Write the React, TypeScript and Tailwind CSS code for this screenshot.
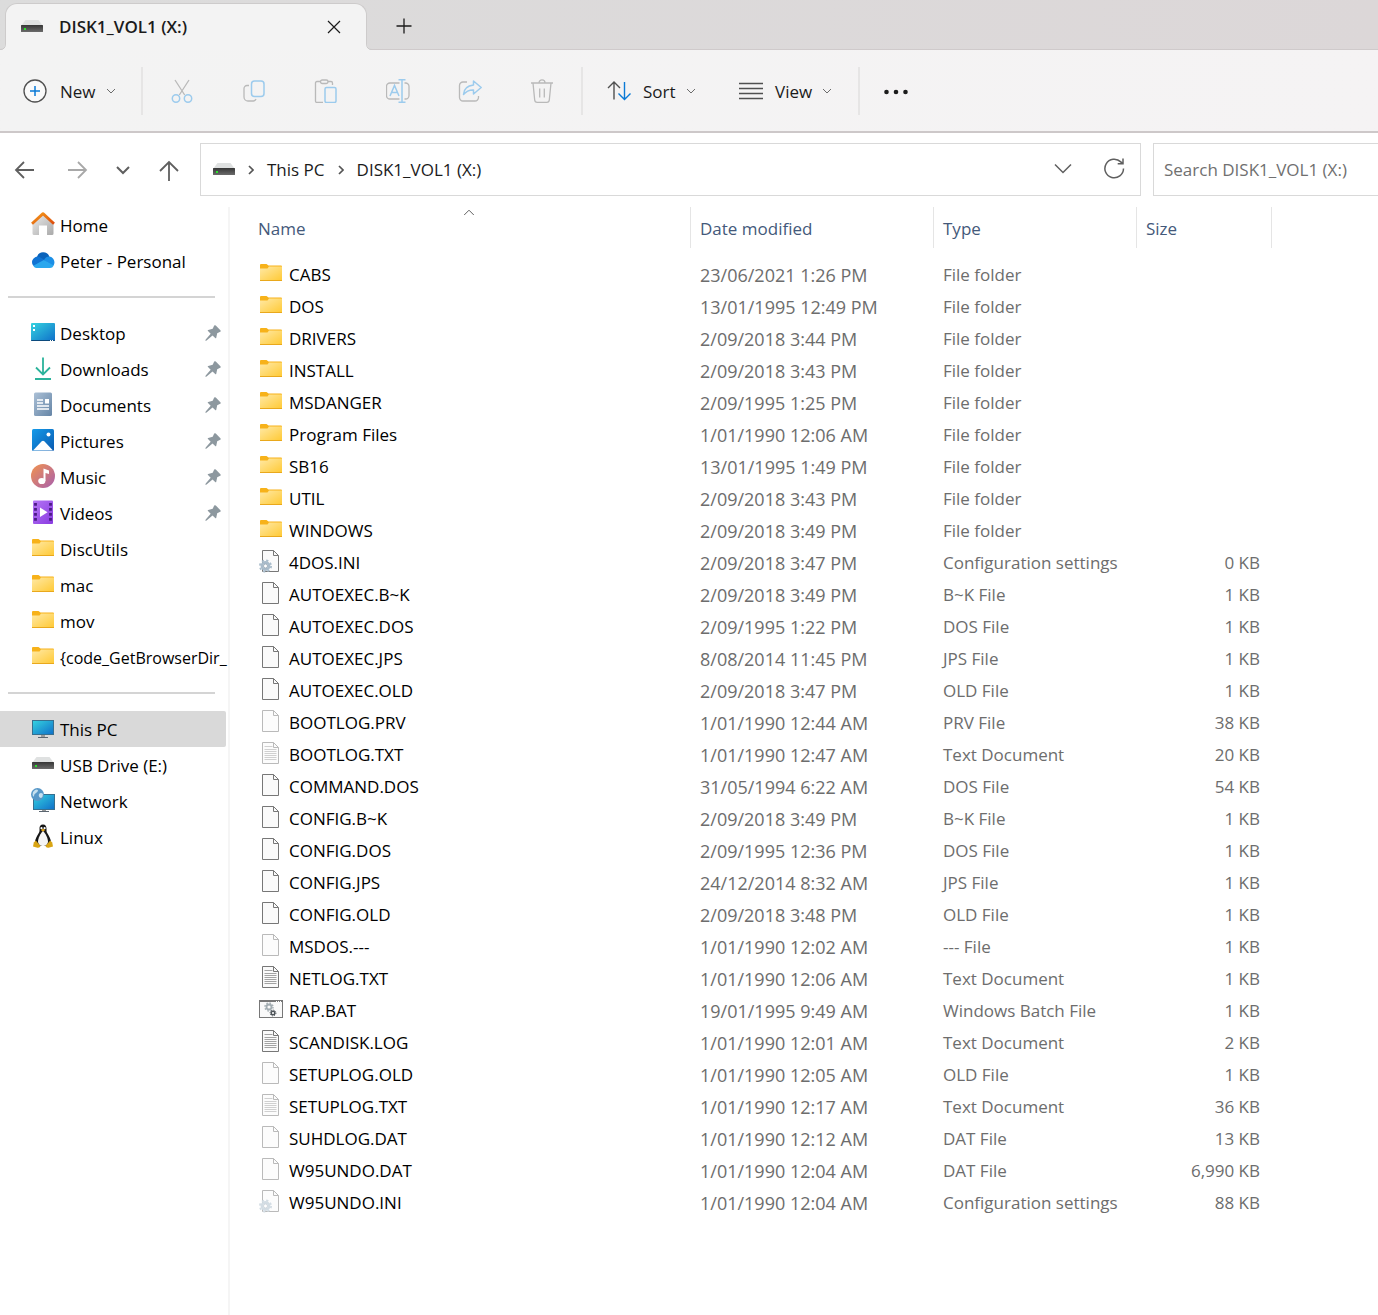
import { useState } from "react"
import type { ReactNode } from "react"

type FileKind = "folder" | "ini" | "file" | "text" | "batch"

type Entry = {
  name: string
  modified: string
  type: string
  size?: string
  kind: FileKind
  hidden?: boolean
}

const entries: Entry[] = [
  { name: "CABS", modified: "23/06/2021 1:26 PM", type: "File folder", kind: "folder" },
  { name: "DOS", modified: "13/01/1995 12:49 PM", type: "File folder", kind: "folder" },
  { name: "DRIVERS", modified: "2/09/2018 3:44 PM", type: "File folder", kind: "folder" },
  { name: "INSTALL", modified: "2/09/2018 3:43 PM", type: "File folder", kind: "folder" },
  { name: "MSDANGER", modified: "2/09/1995 1:25 PM", type: "File folder", kind: "folder" },
  { name: "Program Files", modified: "1/01/1990 12:06 AM", type: "File folder", kind: "folder" },
  { name: "SB16", modified: "13/01/1995 1:49 PM", type: "File folder", kind: "folder" },
  { name: "UTIL", modified: "2/09/2018 3:43 PM", type: "File folder", kind: "folder" },
  { name: "WINDOWS", modified: "2/09/2018 3:49 PM", type: "File folder", kind: "folder" },
  { name: "4DOS.INI", modified: "2/09/2018 3:47 PM", type: "Configuration settings", size: "0 KB", kind: "ini" },
  { name: "AUTOEXEC.B~K", modified: "2/09/2018 3:49 PM", type: "B~K File", size: "1 KB", kind: "file" },
  { name: "AUTOEXEC.DOS", modified: "2/09/1995 1:22 PM", type: "DOS File", size: "1 KB", kind: "file" },
  { name: "AUTOEXEC.JPS", modified: "8/08/2014 11:45 PM", type: "JPS File", size: "1 KB", kind: "file" },
  { name: "AUTOEXEC.OLD", modified: "2/09/2018 3:47 PM", type: "OLD File", size: "1 KB", kind: "file" },
  { name: "BOOTLOG.PRV", modified: "1/01/1990 12:44 AM", type: "PRV File", size: "38 KB", kind: "file", hidden: true },
  { name: "BOOTLOG.TXT", modified: "1/01/1990 12:47 AM", type: "Text Document", size: "20 KB", kind: "text", hidden: true },
  { name: "COMMAND.DOS", modified: "31/05/1994 6:22 AM", type: "DOS File", size: "54 KB", kind: "file" },
  { name: "CONFIG.B~K", modified: "2/09/2018 3:49 PM", type: "B~K File", size: "1 KB", kind: "file" },
  { name: "CONFIG.DOS", modified: "2/09/1995 12:36 PM", type: "DOS File", size: "1 KB", kind: "file" },
  { name: "CONFIG.JPS", modified: "24/12/2014 8:32 AM", type: "JPS File", size: "1 KB", kind: "file" },
  { name: "CONFIG.OLD", modified: "2/09/2018 3:48 PM", type: "OLD File", size: "1 KB", kind: "file" },
  { name: "MSDOS.---", modified: "1/01/1990 12:02 AM", type: "--- File", size: "1 KB", kind: "file", hidden: true },
  { name: "NETLOG.TXT", modified: "1/01/1990 12:06 AM", type: "Text Document", size: "1 KB", kind: "text" },
  { name: "RAP.BAT", modified: "19/01/1995 9:49 AM", type: "Windows Batch File", size: "1 KB", kind: "batch" },
  { name: "SCANDISK.LOG", modified: "1/01/1990 12:01 AM", type: "Text Document", size: "2 KB", kind: "text" },
  { name: "SETUPLOG.OLD", modified: "1/01/1990 12:05 AM", type: "OLD File", size: "1 KB", kind: "file", hidden: true },
  { name: "SETUPLOG.TXT", modified: "1/01/1990 12:17 AM", type: "Text Document", size: "36 KB", kind: "text", hidden: true },
  { name: "SUHDLOG.DAT", modified: "1/01/1990 12:12 AM", type: "DAT File", size: "13 KB", kind: "file", hidden: true },
  { name: "W95UNDO.DAT", modified: "1/01/1990 12:04 AM", type: "DAT File", size: "6,990 KB", kind: "file", hidden: true },
  { name: "W95UNDO.INI", modified: "1/01/1990 12:04 AM", type: "Configuration settings", size: "88 KB", kind: "ini", hidden: true },
]

// Gradients shared by every icon, defined once at the top of the page
function Gradients() {
  return (
    <svg className="absolute h-0 w-0" aria-hidden="true">
      <defs>
        <linearGradient id="g-folder" x1="0" y1="0" x2="1" y2="1">
          <stop offset="0" stopColor="#ffe9a6" />
          <stop offset="1" stopColor="#ffca37" />
        </linearGradient>
        <linearGradient id="g-screen" x1="0" y1="0" x2="1" y2="1">
          <stop offset="0" stopColor="#35d3e0" />
          <stop offset="1" stopColor="#0f6fc9" />
        </linearGradient>
        <linearGradient id="g-roof" x1="0" y1="0" x2="1" y2="1">
          <stop offset="0" stopColor="#f59b1b" />
          <stop offset="1" stopColor="#dc4b0c" />
        </linearGradient>
        <linearGradient id="g-wall" x1="0" y1="0" x2="1" y2="1">
          <stop offset="0" stopColor="#ececec" />
          <stop offset="1" stopColor="#a9a9a9" />
        </linearGradient>
        <linearGradient id="g-doc" x1="0" y1="0" x2="1" y2="1">
          <stop offset="0" stopColor="#abc0d6" />
          <stop offset="1" stopColor="#6585a6" />
        </linearGradient>
        <linearGradient id="g-picture" x1="0" y1="0" x2="1" y2="1">
          <stop offset="0" stopColor="#159bea" />
          <stop offset="1" stopColor="#0a5ab0" />
        </linearGradient>
        <linearGradient id="g-music" x1="0" y1="0" x2="1" y2="1">
          <stop offset="0" stopColor="#f2934e" />
          <stop offset="1" stopColor="#a85fae" />
        </linearGradient>
        <linearGradient id="g-video" x1="0" y1="0" x2="1" y2="1">
          <stop offset="0" stopColor="#b475f5" />
          <stop offset="1" stopColor="#8a3be0" />
        </linearGradient>
        <linearGradient id="g-drive" x1="0" y1="0" x2="0" y2="1">
          <stop offset="0" stopColor="#363636" />
          <stop offset="1" stopColor="#6b6b6b" />
        </linearGradient>
      </defs>
    </svg>
  )
}

function Icon({ children, className = "" }: { children: ReactNode; className?: string }) {
  return (
    <svg
      viewBox="0 0 24 24"
      fill="none"
      aria-hidden="true"
      className={`h-6 w-6 shrink-0 ${className}`}
    >
      {children}
    </svg>
  )
}

function DriveIcon() {
  return (
    <Icon>
      <path d="M5.500 5h13L23 11H1z" fill="#dfe1e1" />
      <rect x="1" y="10" width="22" height="7" rx="0.500" fill="url(#g-drive)" />
      <rect x="4" y="13" width="2" height="2" fill="#2be32b" />
    </Icon>
  )
}

function FolderIcon() {
  return (
    <Icon>
      <path d="M1 4q0-1 1-1h5.500l2 1.600H22q1 0 1 1V10H1z" fill="#f7b21a" />
      <path d="M1 7.500h7.500L10 5.600h13V19H1z" fill="url(#g-folder)" />
      <path d="M1 19.500h22" stroke="#e9a81c" strokeWidth="1" />
    </Icon>
  )
}

function Page({ lines = false }: { lines?: boolean }) {
  return (
    <>
      <path d="M3.500 1.500h11l5 5v16h-16z" fill="#fafafa" stroke="#777777" />
      <path d="M14.500 1.500v5h5" stroke="#777777" />
      {lines && (
        <path
          d="M5.500 5.500h8M5.500 8.500h12M5.500 10.500h12M5.500 12.500h12M5.500 14.500h12M5.500 16.500h12M5.500 18.500h12"
          stroke="#a3a3a3"
        />
      )}
    </>
  )
}

function FileIcon({ kind, hidden }: { kind: FileKind; hidden?: boolean }) {
  const fade = hidden ? "opacity-50" : ""
  switch (kind) {
    case "folder":
      return <FolderIcon />
    case "batch":
      return (
        <Icon>
          <rect x="0.500" y="3.500" width="23" height="17" fill="#f9f9f9" stroke="#777777" />
          <path d="M1 4.500h22" stroke="#777777" />
          <path d="M17 4.500h1M19 4.500h1M21 4.500h1" stroke="#ffffff" />
          <circle cx="10" cy="10" r="2.500" stroke="#a3adb2" strokeWidth="1.800" />
          <circle cx="10" cy="10" r="4" stroke="#a3adb2" strokeWidth="1.400" strokeDasharray="1.570 1.570" />
          <circle cx="14" cy="16" r="1.800" stroke="#4d5358" strokeWidth="1.400" />
          <circle cx="14" cy="16" r="2.900" stroke="#4d5358" strokeWidth="1" strokeDasharray="1.140 1.140" />
        </Icon>
      )
    case "ini":
      return (
        <Icon className={fade}>
          <Page />
          <circle cx="6.500" cy="17" r="3.600" fill="#eef4f8" stroke="#a9bccb" strokeWidth="2.600" />
          <circle cx="6.500" cy="17" r="5.600" stroke="#a9bccb" strokeWidth="1.800" strokeDasharray="2.200 2.200" />
          <circle cx="6.500" cy="17" r="2" fill="#ffffff" stroke="#8497a5" strokeWidth="0.700" />
        </Icon>
      )
    default:
      return (
        <Icon className={fade}>
          <Page lines={kind === "text"} />
        </Icon>
      )
  }
}

function HomeIcon() {
  return (
    <Icon>
      <path d="M1.500 12 12 2l10.500 10v9.500q0 1.500-1.500 1.500h-5V13.500H8V23H3q-1.500 0-1.500-1.500z" fill="url(#g-wall)" />
      <path d="M1 11.800 12 1.600l11 10.200" stroke="url(#g-roof)" strokeWidth="2.800" strokeLinejoin="round" />
    </Icon>
  )
}

function CloudIcon() {
  return (
    <Icon>
      <path d="M6 9a6.500 6.500 0 0 1 12.300-.5L20 14H7z" fill="#0a63bb" />
      <path d="M5.500 19.500A5.500 5.500 0 1 1 8.600 9l8.400 5-8 5z" fill="#1073d3" />
      <path d="M13 12c2-4.500 7-4.500 9-1.500 2.500 3.500 1.500 7-1 8z" fill="#1b8fe6" />
      <path d="M2.300 17.800 12.800 12l10 5.500Q21.500 20 19 20H5.500q-2 0-3.200-2.200z" fill="#2aa7ee" />
    </Icon>
  )
}

function DesktopIcon() {
  return (
    <Icon>
      <rect y="3" width="24" height="18" rx="1" fill="url(#g-screen)" />
      <path d="M0 20h24q0 1-1 1H1q-1 0-1-1z" fill="#0c4a7c" />
      <path d="M2 5h2v2H2zM2 9h2v2H2z" fill="#ffffff" />
      <path d="M19 20.500h1M21 20.500h1" stroke="#ffffff" />
    </Icon>
  )
}

function DownloadsIcon() {
  return (
    <Icon>
      <path d="M12 1.500v17M5 11.500l7 7 7-7M4 23h16" stroke="#2bb39b" strokeWidth="1.800" />
    </Icon>
  )
}

function DocumentsIcon() {
  return (
    <Icon>
      <rect x="3" y="0.500" width="18" height="23.500" rx="1.500" fill="url(#g-doc)" />
      <path d="M6 8h6M6 11h6M6 14h12M6 17h12" stroke="#ffffff" strokeWidth="1.300" />
      <rect x="14" y="7" width="4" height="4.500" fill="#ffffff" />
    </Icon>
  )
}

function PicturesIcon() {
  return (
    <Icon>
      <rect x="1" y="1" width="22" height="22" rx="1.500" fill="url(#g-picture)" />
      <path d="m2 22.500 8.700-9.200q1.300-1.300 2.600 0L22 22.500z" fill="#ffffff" />
      <circle cx="17.500" cy="6.500" r="2" fill="#ffffff" />
    </Icon>
  )
}

function MusicIcon() {
  return (
    <Icon>
      <circle cx="12" cy="12" r="12" fill="url(#g-music)" />
      <path d="M12.500 4.500 18 6.500v3.500l-3.500-1V17h-2z" fill="#ffffff" />
      <ellipse cx="10.800" cy="17" rx="3.600" ry="3.100" fill="#ffffff" />
    </Icon>
  )
}

function VideosIcon() {
  return (
    <Icon>
      <rect x="2" y="0.500" width="20" height="23.500" rx="1" fill="url(#g-video)" />
      <path d="M4.500 3v20M19.500 3v20" stroke="#4b1c86" strokeWidth="2.800" strokeDasharray="2.800 2.200" />
      <path d="m9 7.500 7.500 4.800L9 17z" fill="#ffffff" />
    </Icon>
  )
}

function PcIcon() {
  return (
    <Icon>
      <path d="M10 18h4v3h-4z" fill="#9a9a9a" />
      <path d="M7 21.500h10" stroke="#5b6670" strokeWidth="1" />
      <rect x="1.500" y="4.500" width="21" height="14" fill="url(#g-screen)" stroke="#37708f" />
    </Icon>
  )
}

function NetworkIcon() {
  return (
    <Icon>
      <path d="M11 21h4v2.500h-4z" fill="#9a9a9a" />
      <path d="M8 23.500h10" stroke="#5b6670" strokeWidth="1" />
      <rect x="2.500" y="6.500" width="21" height="15" fill="url(#g-screen)" stroke="#37708f" />
      <circle cx="6.500" cy="6.500" r="6.500" fill="#5797c8" />
      <path d="M2 4q3-3.500 5-2 0 2-2 3t-2 3-1.500-1zM8 6q2-2 4 0 0 3-2 4-3-1-2-4z" fill="#c6e0ef" />
    </Icon>
  )
}

function LinuxIcon() {
  return (
    <Icon>
      <path
        d="M12 .5c-2.600 0-3.600 1.700-3.500 4.200.1 2 .2 3-1 4.800C6 12 4 15 4 18.500L7 22h10l3-3.500c0-3.500-2-6.500-3.500-9-1.200-1.800-.9-2.800-1-4.800C15.400 2.200 14.600.5 12 .5z"
        fill="#161616"
      />
      <path d="M12 7c-2.200 1.800-5 7-5 11 1 3.500 2.600 4 5 4s4-.5 5-4c0-4-2.800-9.200-5-11z" fill="#f4f4f4" />
      <circle cx="10.500" cy="4.200" r="1.100" fill="#ffffff" />
      <circle cx="13.600" cy="4.200" r="1.100" fill="#ffffff" />
      <path d="m9.800 6 2.200-1.200L14.300 6 12 7.600z" fill="#e8a713" />
      <path d="M4.800 16.500 9.500 22q-.5 2-3 1.700L2 22.500l.8-4z" fill="#d9a514" />
      <path d="M19.200 16.500 14.500 22q.5 2 3 1.700l4.500-1.200-.8-4z" fill="#d9a514" />
    </Icon>
  )
}

function PinIcon() {
  return (
    <svg viewBox="0 0 16 16" aria-hidden="true" className="h-4 w-4 shrink-0">
      <path
        d="M9.200.6q.8-.8 1.600 0l4.600 4.600q.8.900-.2 1.500l-3 1.600-1 4.600q-.3.800-1 .2L7.500 10.400 1.600 15.600.4 16l.3-1.500 5-5.700L3 6q-.7-.7.2-1l4.500-1.200z"
        fill="#8d989f"
      />
    </svg>
  )
}

function ChevronIcon({ className = "" }: { className?: string }) {
  return (
    <svg viewBox="0 0 10 6" fill="none" aria-hidden="true" className={`shrink-0 ${className}`}>
      <path d="m1 1 4 4 4-4" stroke="currentColor" vectorEffect="non-scaling-stroke" />
    </svg>
  )
}

type Place = { label: string; icon: ReactNode; pinned?: boolean; long?: boolean }

const accounts: Place[] = [
  { label: "Home", icon: <HomeIcon /> },
  { label: "Peter - Personal", icon: <CloudIcon /> },
]

const quickAccess: Place[] = [
  { label: "Desktop", icon: <DesktopIcon />, pinned: true },
  { label: "Downloads", icon: <DownloadsIcon />, pinned: true },
  { label: "Documents", icon: <DocumentsIcon />, pinned: true },
  { label: "Pictures", icon: <PicturesIcon />, pinned: true },
  { label: "Music", icon: <MusicIcon />, pinned: true },
  { label: "Videos", icon: <VideosIcon />, pinned: true },
  { label: "DiscUtils", icon: <FolderIcon /> },
  { label: "mac", icon: <FolderIcon /> },
  { label: "mov", icon: <FolderIcon /> },
  { label: "{code_GetBrowserDir_", icon: <FolderIcon />, long: true },
]

const devices: Place[] = [
  { label: "This PC", icon: <PcIcon /> },
  { label: "USB Drive (E:)", icon: <DriveIcon /> },
  { label: "Network", icon: <NetworkIcon /> },
  { label: "Linux", icon: <LinuxIcon /> },
]

const fileActions = [
  {
    label: "Cut",
    icon: (
      <Icon>
        <path d="m5 1 9.700 15M19 1 9.300 16" stroke="#b9b9b9" strokeWidth="1.300" />
        <circle cx="6" cy="19.500" r="3.700" stroke="#9ccbed" strokeWidth="1.500" />
        <circle cx="18" cy="19.500" r="3.700" stroke="#9ccbed" strokeWidth="1.500" />
      </Icon>
    ),
  },
  {
    label: "Copy",
    icon: (
      <Icon>
        <path d="M7 6.500H5a3 3 0 0 0-3 3V18a4 4 0 0 0 4 4h5.500a3 3 0 0 0 2.500-2" stroke="#b9b9b9" strokeWidth="1.300" />
        <rect x="9.500" y="2" width="12.500" height="15.500" rx="3" stroke="#9ccbed" strokeWidth="1.500" />
      </Icon>
    ),
  },
  {
    label: "Paste",
    icon: (
      <Icon>
        <path d="M7 2.500H3Q1.500 2.500 1.500 4v18q0 1.500 1.500 1.500h6M14 2.500h3q1.500 0 1.500 1.500v2" stroke="#b9b9b9" strokeWidth="1.300" />
        <rect x="6.500" y="1" width="7.500" height="3.500" rx="1.700" stroke="#b9b9b9" strokeWidth="1.300" />
        <rect x="11" y="8.500" width="11" height="15" rx="1.500" stroke="#9ccbed" strokeWidth="1.500" />
      </Icon>
    ),
  },
  {
    label: "Rename",
    icon: (
      <Icon>
        <path d="M13.500 4H4a3.500 3.500 0 0 0-3.500 3.500v9A3.500 3.500 0 0 0 4 20h9.500M18.500 4h1A3.500 3.500 0 0 1 23 7.500v9a3.500 3.500 0 0 1-3.500 3.500h-1" stroke="#b9b9b9" strokeWidth="1.300" />
        <path d="M12.500.8h7M16 .8v22.400M12.500 23.200h7M4 17 8.500 6.500 13 17M5.500 13.500h6" stroke="#9ccbed" strokeWidth="1.500" />
      </Icon>
    ),
  },
  {
    label: "Share",
    icon: (
      <Icon>
        <path d="M9 3H5A3.500 3.500 0 0 0 1.500 6.500v12A3.500 3.500 0 0 0 5 22h12a3.500 3.500 0 0 0 3.500-3.500V17" stroke="#b9b9b9" strokeWidth="1.300" />
        <path d="M15.500 2 23.200 8.500l-7.700 6.500v-4q-6-.3-10 4.500.5-8.500 10-9.500z" stroke="#9ccbed" strokeWidth="1.500" strokeLinejoin="round" />
      </Icon>
    ),
  },
  {
    label: "Delete",
    icon: (
      <Icon>
        <path d="M1 4h22M3 4l1.700 17q.2 2.300 2.500 2.300h9.600q2.300 0 2.500-2.300L21 4M9 3.800a3 3 0 0 1 6 0M9.700 9.500v9M14.300 9.500v9" stroke="#b9b9b9" strokeWidth="1.300" />
      </Icon>
    ),
  },
]

function Divider() {
  return <div className="h-12 w-0.5 shrink-0 bg-[#e6e5e5]" />
}

// Curved foot that joins the active tab to the bar below it
function TabFoot({ className }: { className: string }) {
  return (
    <svg viewBox="0 0 6 6" aria-hidden="true" className={`absolute bottom-0 h-1.5 w-1.5 ${className}`}>
      <path d="M6 0v6H0q5 0 5-6z" fill="#f3f3f3" />
      <path d="M0 5.500q5.500 0 5.500-5.500" fill="none" stroke="#cdcbcb" />
    </svg>
  )
}

function TabBar() {
  return (
    <div className="flex h-[50px] items-end border-b border-[#cfcacb] bg-linear-to-r from-[#dcdcdc] to-[#dcd7d8] pl-[5px]">
      <div className="relative -mb-px flex h-[47px] w-[362px] items-center rounded-t-xl border border-b-0 border-[#cdcbcb] bg-[#f3f3f3] pr-6 pl-3.5">
        <TabFoot className="-left-1.5" />
        <DriveIcon />
        <span className="ml-[15px] flex-1 text-[17px] font-semibold text-[#1b1b1b]">DISK1_VOL1 (X:)</span>
        <button type="button" aria-label="Close tab" className="text-[#1b1b1b]">
          <svg viewBox="0 0 16 16" fill="none" className="h-4 w-4">
            <path d="m2 2 12 12M14 2 2 14" stroke="currentColor" strokeWidth="1.200" />
          </svg>
        </button>
        <TabFoot className="-right-1.5 -scale-x-100" />
      </div>
      <button type="button" aria-label="New tab" className="flex h-[47px] items-center pl-[29px] text-[#1b1b1b]">
        <svg viewBox="0 0 16 16" fill="none" className="h-4 w-4">
          <path d="M8 .5v15M.5 8h15" stroke="currentColor" strokeWidth="1.300" />
        </svg>
      </button>
    </div>
  )
}

function CommandBar() {
  return (
    <div className="flex h-[83px] items-center border-b-2 border-[#cdc8c9] bg-linear-to-r from-[#f3f3f3] to-[#f5f3f4] text-[17px] text-[#1b1b1b]">
      <button type="button" className="flex h-12 w-[141px] items-center pl-[23px]">
        <Icon>
          <circle cx="12" cy="12" r="11" fill="#fafafa" stroke="#505050" strokeWidth="1.300" />
          <path d="M12 7v10M7 12h10" stroke="#0a7ad6" strokeWidth="1.500" />
        </Icon>
        <span className="ml-[13px] pt-0.5">New</span>
        <ChevronIcon className="ml-2.5 w-2.5 text-[#6b6b6b]" />
      </button>
      <Divider />
      <div className="flex w-[438px] justify-between px-[27px]">
        {fileActions.map((action) => (
          <button key={action.label} type="button" aria-label={action.label} disabled>
            {action.icon}
          </button>
        ))}
      </div>
      <Divider />
      <button type="button" className="flex h-12 w-[132px] items-center pl-6">
        <Icon>
          <path d="M7 20.500V3M1 9l6-6 6 6" stroke="#505050" strokeWidth="1.400" />
          <path d="M17.500 3v17.500M11.500 14.500l6 6 6-6" stroke="#0a7ad6" strokeWidth="1.400" />
        </Icon>
        <span className="ml-3 pt-0.5">Sort</span>
        <ChevronIcon className="ml-2.5 w-2.5 text-[#6b6b6b]" />
      </button>
      <button type="button" className="flex h-12 w-[143px] items-center pl-6">
        <Icon>
          <path d="M0 4.500h24M0 9.500h24M0 14.500h24M0 19.500h24" stroke="#505050" strokeWidth="1.300" />
        </Icon>
        <span className="ml-3 pt-0.5">View</span>
        <ChevronIcon className="ml-2.5 w-2.5 text-[#6b6b6b]" />
      </button>
      <Divider />
      <button type="button" aria-label="See more" className="ml-6">
        <Icon>
          <g fill="#1b1b1b">
            <circle cx="2.500" cy="13" r="2.300" />
            <circle cx="12" cy="13" r="2.300" />
            <circle cx="21.500" cy="13" r="2.300" />
          </g>
        </Icon>
      </button>
    </div>
  )
}

function BreadcrumbArrow() {
  return (
    <svg viewBox="0 0 6 10" fill="none" aria-hidden="true" className="h-2.5 w-1.5 shrink-0">
      <path d="m1 1 4 4-4 4" stroke="#555555" strokeWidth="1.700" />
    </svg>
  )
}

function AddressBar() {
  return (
    <div className="flex items-center pt-2.5 text-[17px]">
      <div className="flex w-[200px] shrink-0 items-center gap-[22px] pl-3 text-[#5f5f5f]">
        <button type="button" aria-label="Back">
          <Icon>
            <path d="M22 12H4M12 4l-8 8 8 8" stroke="#5f5f5f" strokeWidth="1.800" />
          </Icon>
        </button>
        <button type="button" aria-label="Forward" className="ml-[7px]" disabled>
          <Icon>
            <path d="M3 12h18M13 4l8 8-8 8" stroke="#a8a8a8" strokeWidth="1.800" />
          </Icon>
        </button>
        <button type="button" aria-label="Recent locations">
          <Icon>
            <path d="m6 9 6 6 6-6" stroke="#5f5f5f" strokeWidth="2" />
          </Icon>
        </button>
        <button type="button" aria-label="Up">
          <Icon>
            <path d="M12 23V4M3 13l9-9 9 9" stroke="#5f5f5f" strokeWidth="1.800" />
          </Icon>
        </button>
      </div>
      <div className="flex h-[53px] flex-1 items-center border border-[#d9d9d9] px-[11px] text-[#1b1b1b]">
        <DriveIcon />
        <nav aria-label="Path" className="ml-3 flex flex-1 items-center gap-[13px]">
          <BreadcrumbArrow />
          <a href="#this-pc">This PC</a>
          <BreadcrumbArrow />
          <a href="#disk1">DISK1_VOL1 (X:)</a>
        </nav>
        <button type="button" aria-label="Previous locations" className="text-[#5f5f5f]">
          <Icon>
            <path d="m4 6.500 8 8 8-8" stroke="currentColor" strokeWidth="1.500" />
          </Icon>
        </button>
        <button type="button" aria-label="Refresh" className="mr-[3px] ml-[27px] text-[#5f5f5f]">
          <Icon>
            <path d="M21.500 10.500a9.300 9.300 0 1 1-2.700-6.600l1.700 1.700M21 .5v5.300h-5.300" stroke="currentColor" strokeWidth="1.500" />
          </Icon>
        </button>
      </div>
      <input
        type="search"
        aria-label="Search DISK1_VOL1 (X:)"
        placeholder="Search DISK1_VOL1 (X:)"
        className="ml-3 h-[53px] w-[225px] shrink-0 border border-r-0 border-[#d9d9d9] px-2.5 outline-none placeholder:text-[#707070]"
      />
    </div>
  )
}

type SidebarListProps = {
  items: Place[]
  selected: string
  onSelect: (label: string) => void
}

function SidebarList({ items, selected, onSelect }: SidebarListProps) {
  return (
    <ul>
      {items.map((item) => (
        <li key={item.label}>
          <button
            type="button"
            onClick={() => onSelect(item.label)}
            className={`flex h-9 w-[226px] items-center rounded-r-xs pl-[31px] text-left ${selected === item.label ? "bg-[#d9d9d9]" : ""} ${item.pinned ? "pr-[5px]" : ""}`}
          >
            <span className="pb-0.5">{item.icon}</span>
            <span className={`ml-[5px] flex-1 pt-0.5 whitespace-nowrap ${item.long ? "text-[16px]" : ""}`}>
              {item.label}
            </span>
            {item.pinned && <PinIcon />}
          </button>
        </li>
      ))}
    </ul>
  )
}

function Sidebar() {
  const [selected, setSelected] = useState("This PC")

  return (
    <aside className="w-[230px] shrink-0 border-r-2 border-[#f5f5f5]">
      <SidebarList items={accounts} selected={selected} onSelect={setSelected} />
      <hr className="my-[17px] mr-[13px] ml-2 border-t-2 border-[#d4d4d4]" />
      <SidebarList items={quickAccess} selected={selected} onSelect={setSelected} />
      <hr className="my-[17px] mr-[13px] ml-2 border-t-2 border-[#d4d4d4]" />
      <SidebarList items={devices} selected={selected} onSelect={setSelected} />
    </aside>
  )
}

function ColumnHeader({ children, first = false }: { children: ReactNode; first?: boolean }) {
  return (
    <th scope="col" className="h-[52px] p-0 text-left align-top font-normal">
      <div
        className={`relative flex h-[41px] items-center border-r border-[#e5e5e5] pt-0.5 text-[#44597a] ${first ? "pl-7" : "pl-[9px]"}`}
      >
        {children}
      </div>
    </th>
  )
}

function FileTable() {
  return (
    <table className="w-[1042px] table-fixed border-collapse self-start text-[17px]">
      <colgroup>
        <col className="w-[461px]" />
        <col className="w-[243px]" />
        <col className="w-[203px]" />
        <col className="w-[135px]" />
      </colgroup>
      <thead>
        <tr>
          <ColumnHeader first>
            Name
            {/* Sort direction marker */}
            <span className="absolute top-0.5 right-0 left-[18px] flex justify-center">
              <ChevronIcon className="w-3 rotate-180 text-[#5f5f5f]" />
            </span>
          </ColumnHeader>
          <ColumnHeader>Date modified</ColumnHeader>
          <ColumnHeader>Type</ColumnHeader>
          <ColumnHeader>Size</ColumnHeader>
        </tr>
      </thead>
      <tbody className="text-[#6d6d6d]">
        {entries.map((entry) => (
          <tr key={entry.name} className="h-8 hover:bg-[#e5f3ff]">
            <td className="p-0 pl-[29px] text-black">
              <div className="flex items-center gap-1.5">
                <span className="pb-1">
                  <FileIcon kind={entry.kind} hidden={entry.hidden} />
                </span>
                {entry.name}
              </div>
            </td>
            <td className="p-0 pl-[9px] text-[18px]">{entry.modified}</td>
            <td className="p-0 pl-[9px]">{entry.type}</td>
            <td className="p-0 pr-3 text-right">{entry.size}</td>
          </tr>
        ))}
      </tbody>
    </table>
  )
}

export default function App() {
  return (
    <div className="flex min-h-screen flex-col overflow-x-hidden bg-white font-['Open_Sans','Noto_Sans',sans-serif] text-[17px] leading-6 text-black">
      <Gradients />
      <TabBar />
      <CommandBar />
      <AddressBar />
      <main className="flex flex-1 pt-[11px]">
        <Sidebar />
        <FileTable />
      </main>
    </div>
  )
}
